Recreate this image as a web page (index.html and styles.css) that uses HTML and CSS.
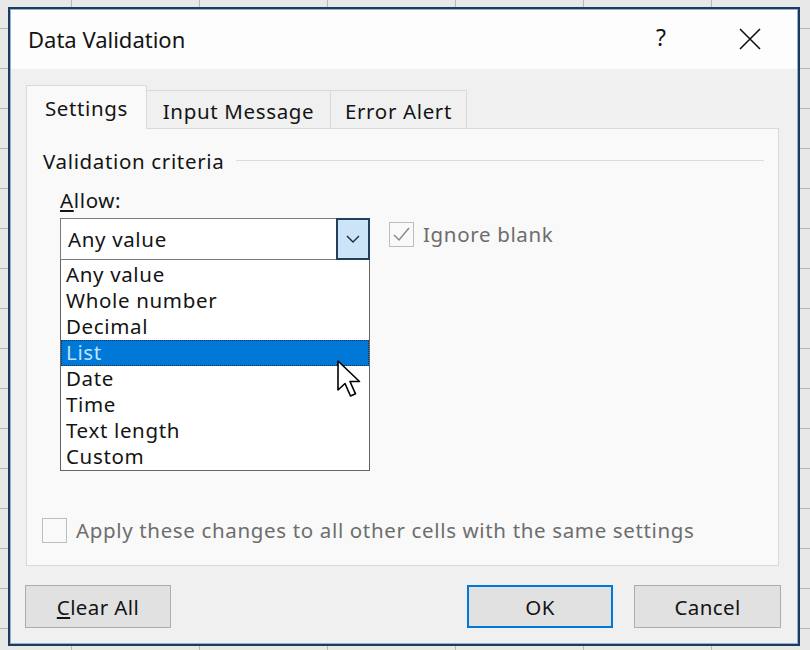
FILE: index.html
```html
<!DOCTYPE html>
<html>
<head>
<meta charset="utf-8">
<link rel="stylesheet" href="styles.css">
</head>
<body>
<div class="dialog">
  <div class="titlebar">
    <span class="title">Data Validation</span>
    <div class="title-actions">
      <span class="help">?</span>
      <svg class="close" width="22" height="22" viewBox="0 0 22 22"><path d="M1 1 L21 21 M21 1 L1 21" stroke="#111" stroke-width="1.6" fill="none"/></svg>
    </div>
  </div>
  <div class="body">
    <div class="tabs">
      <div class="tab tab-settings active">Settings</div>
      <div class="tab tab-input">Input Message</div>
      <div class="tab tab-error">Error Alert</div>
    </div>
    <div class="panel">
      <div class="legend-row">
        <span class="legend">Validation criteria</span>
        <span class="legend-line"></span>
      </div>
      <div class="criteria">
        <div class="allow-label"><u>A</u>llow:</div>
        <div class="allow-row">
          <div class="combo-wrap">
            <div class="combo">
              <span class="combo-value">Any value</span>
              <span class="combo-btn">
                <svg width="14" height="8" viewBox="0 0 14 8"><path d="M1 1 L7 7 L13 1" stroke="#1a2a3a" stroke-width="1.4" fill="none"/></svg>
              </span>
            </div>
            <ul class="dropdown">
              <li>Any value</li>
              <li>Whole number</li>
              <li>Decimal</li>
              <li class="selected">List</li>
              <li>Date</li>
              <li>Time</li>
              <li>Text length</li>
              <li>Custom</li>
            </ul>
            <svg class="cursor" width="28" height="40" viewBox="0 0 28 40"><path d="M1 1 L1 30 L8 23.5 L13.5 36 L18.5 33.8 L13 21.5 L22.5 21.5 Z" fill="#fff" stroke="#000" stroke-width="1.6" stroke-linejoin="round"/></svg>
          </div>
          <label class="check disabled">
            <span class="box">
              <svg width="23" height="23" viewBox="0 0 23 23"><path d="M4 12 L9 17 L19 5" stroke="#8a8a8a" stroke-width="1.5" fill="none"/></svg>
            </span>
            <span class="check-text">Ignore blank</span>
          </label>
        </div>
      </div>
      <label class="check apply disabled">
        <span class="box"></span>
        <span class="check-text">Apply these changes to all other cells with the same settings</span>
      </label>
    </div>
    <div class="buttons">
      <button class="btn"><u>C</u>lear All</button>
      <div class="btn-group">
        <button class="btn primary">OK</button>
        <button class="btn cancel">Cancel</button>
      </div>
    </div>
  </div>
</div>
</body>
</html>
```

FILE: styles.css
```css
html, body {
  margin: 0;
  padding: 0;
}
body {
  width: 810px;
  height: 650px;
  overflow: hidden;
  background-color: #e8e8e8;
  background-image:
    linear-gradient(to right, #b9b9b9 1px, transparent 1px),
    linear-gradient(to bottom, #b9b9b9 1px, transparent 1px);
  background-size: 128px 40px, 128px 40px;
  background-position: 71px 0, 0 28px;
  padding: 7px 0 0 8px;
  box-sizing: border-box;
  font-family: "Noto Sans", "DejaVu Sans", sans-serif;
  color: #141414;
}
.dialog {
  width: 792px;
  height: 639px;
  box-sizing: border-box;
  border: 2px solid #1f3a5a;
  box-shadow: inset 0 0 0 1px #8db2d6;
  background: #f0f0f0;
  display: flex;
  flex-direction: column;
}
.titlebar {
  height: 59px;
  flex: none;
  background: #fdfdfd;
  display: flex;
  align-items: center;
  justify-content: space-between;
  padding: 0 36px 0 17px;
  margin: 1px 1px 0 1px;
}
.title {
  font-size: 22px;
  margin-top: -2px;
}
.title-actions {
  display: flex;
  align-items: center;
  gap: 73px;
}
.help {
  font-size: 23px;
  line-height: 1;
  margin-top: -4px;
}
.close {
  display: block;
  margin-top: -2px;
}
.body {
  flex: 1;
  display: flex;
  flex-direction: column;
  padding: 16px 0 0 16px;
}
.tabs {
  display: flex;
  align-items: flex-end;
  height: 43px;
  position: relative;
  z-index: 1;
}
.tab {
  box-sizing: border-box;
  height: 38px;
  border: 1px solid #d9d9d9;
  border-bottom: none;
  background: #f0f0f0;
  font-size: 20.5px;
  letter-spacing: 0.65px;
  display: flex;
  align-items: center;
  justify-content: center;
  padding-top: 2px;
}
.tab + .tab {
  border-left: none;
}
.tab.active {
  height: 44px;
  margin-bottom: -1px;
  background: #f9f9f9;
  padding-top: 3px;
  padding-bottom: 3px;
}
.tab-settings { width: 121px; }
.tab-input { width: 184px; }
.tab-error { width: 136px; }
.panel {
  width: 753px;
  height: 438px;
  box-sizing: border-box;
  border: 1px solid #d9d9d9;
  background: #f9f9f9;
  padding: 19px 14px 21px 16px;
  display: flex;
  flex-direction: column;
}
.legend-row {
  display: flex;
  align-items: center;
  height: 26px;
}
.legend {
  font-size: 20.5px;
  letter-spacing: 0.65px;
  line-height: 26px;
}
.legend-line {
  flex: 1;
  height: 1px;
  background: #dcdcdc;
  margin-left: 12px;
  margin-top: -1px;
}
.criteria {
  padding-left: 17px;
  margin-top: 13px;
}
.allow-label {
  font-size: 20.5px;
  letter-spacing: 0.65px;
  line-height: 26px;
}
.allow-row {
  display: flex;
  align-items: flex-start;
  margin-top: 5px;
  gap: 19px;
}
.combo-wrap {
  position: relative;
  width: 310px;
}
.combo {
  height: 42px;
  box-sizing: border-box;
  border: 1px solid #7a7a7a;
  background: #fff;
  display: flex;
  align-items: center;
  justify-content: space-between;
}
.combo-value {
  font-size: 20.5px;
  letter-spacing: 0.65px;
  padding-left: 7px;
}
.combo-btn {
  width: 34px;
  height: 42px;
  box-sizing: border-box;
  margin: -1px -1px -1px 0;
  border: 2px solid #223f5c;
  background: #cce4f7;
  display: flex;
  align-items: center;
  justify-content: center;
}
.combo-btn svg {
  display: block;
}
.dropdown {
  position: absolute;
  top: 42px;
  left: 0;
  width: 310px;
  height: 211px;
  box-sizing: border-box;
  margin: 0;
  padding: 2px 0 0 0;
  list-style: none;
  background: #fff;
  border: 1px solid #646464;
  border-top: none;
}
.dropdown li {
  height: 26px;
  line-height: 25px;
  font-size: 20.5px;
  letter-spacing: 0.65px;
  padding-left: 5px;
  box-sizing: border-box;
}
.dropdown li.selected {
  background: #0078d7;
  color: #bfe3ff;
  outline: 1px dotted #1d3550;
  outline-offset: -1px;
}
.cursor {
  position: absolute;
  left: 277px;
  top: 142px;
}
.check {
  display: flex;
  align-items: center;
  gap: 9px;
}
.box {
  width: 25px;
  height: 25px;
  box-sizing: border-box;
  border: 1px solid #bdbdbd;
  background: #f9f9f9;
  display: flex;
  align-items: center;
  justify-content: center;
}
.box svg {
  display: block;
}
.check.disabled .check-text {
  color: #6d6d6d;
}
.check-text {
  font-size: 20.5px;
  letter-spacing: 0.65px;
}
.criteria .check {
  margin-top: 2px;
}
.apply {
  margin-top: auto;
  margin-left: -1px;
}
.buttons {
  display: flex;
  justify-content: space-between;
  align-items: flex-start;
  margin-top: 19px;
  margin-left: -1px;
  width: 756px;
}
.btn-group {
  display: flex;
  gap: 21px;
}
.btn {
  width: 146px;
  height: 43px;
  box-sizing: border-box;
  border: 1px solid #adadad;
  background: #e1e1e1;
  font-family: "Noto Sans", "DejaVu Sans", sans-serif;
  font-size: 20.5px;
  letter-spacing: 0.4px;
  color: #141414;
  padding: 0;
}
.btn.cancel {
  width: 147px;
}
.btn.primary {
  border: 2px solid #0078d7;
}
.btn u, .allow-label u {
  text-underline-offset: 2px;
}
```
